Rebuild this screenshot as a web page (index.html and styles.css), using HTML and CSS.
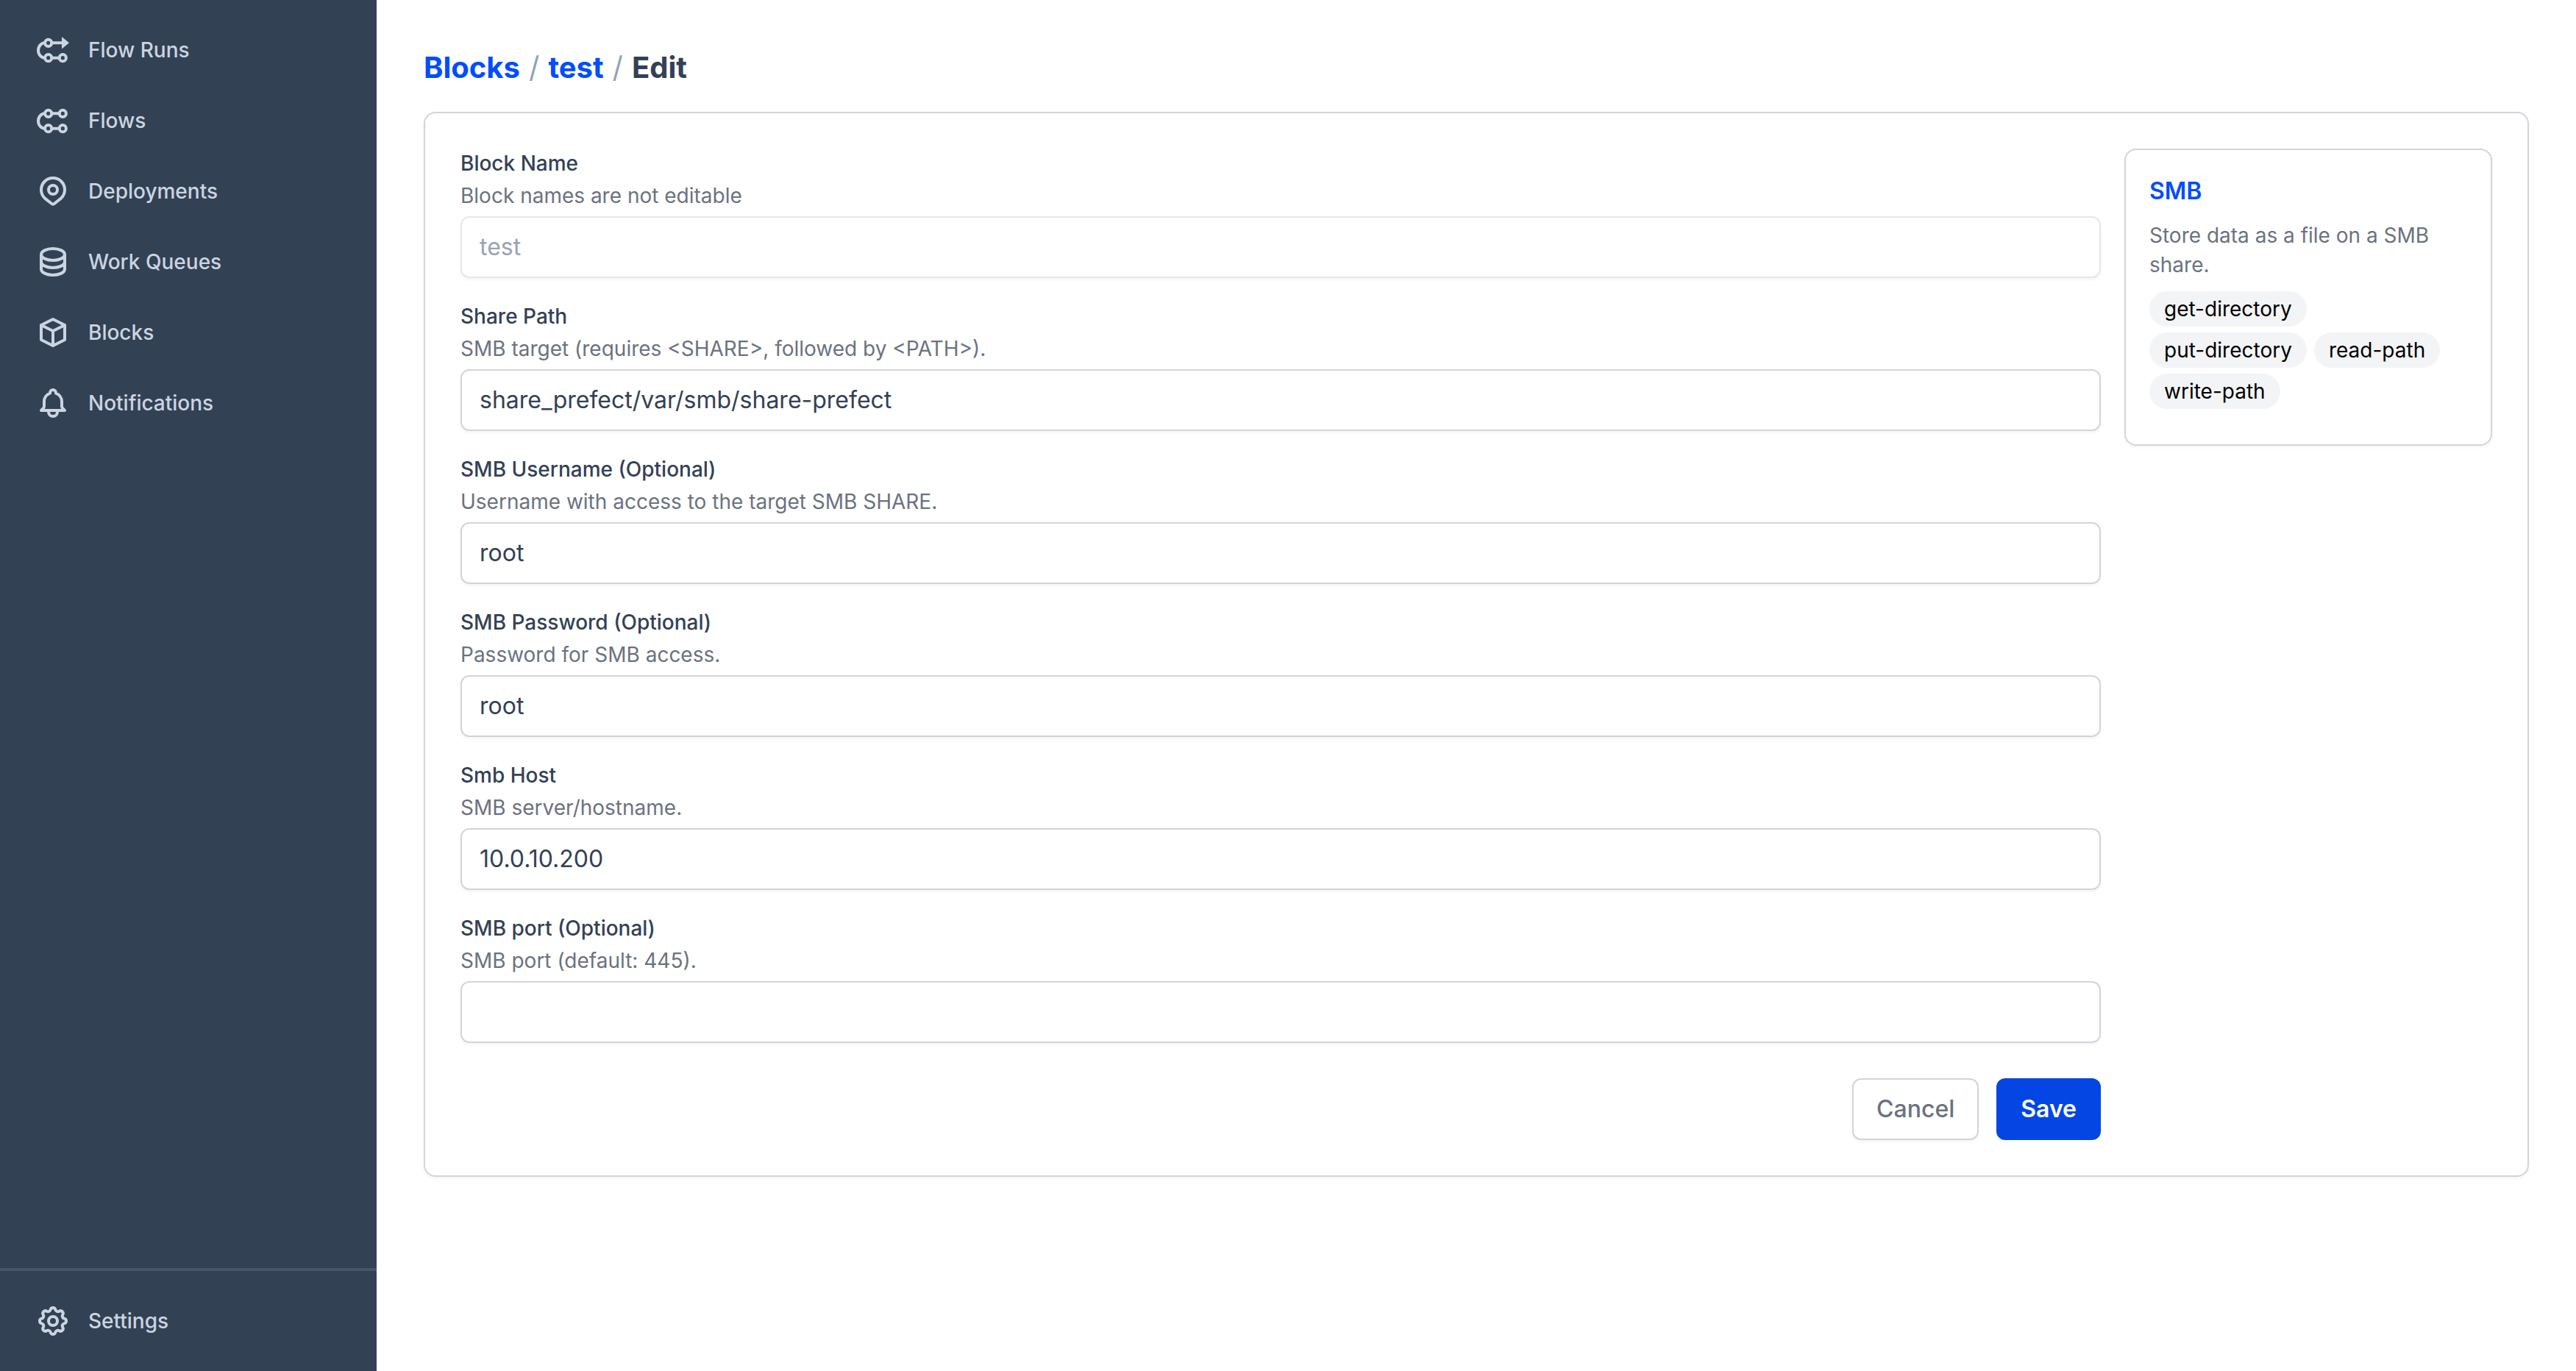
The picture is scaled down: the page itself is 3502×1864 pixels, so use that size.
FILE: index.html
```html
<!DOCTYPE html>
<html lang="en">
<head>
<meta charset="utf-8">
<title>Edit Block</title>
<link rel="stylesheet" href="styles.css">
</head>
<body>
<div class="app">
  <aside class="sidebar">
    <nav class="nav">
      <a class="nav-item"><svg class="icon" viewBox="0 0 24 24"><circle cx="8.85" cy="7.15" r="2.3"/><circle cx="8.85" cy="17.35" r="2.3"/><circle cx="18.65" cy="17.35" r="2.3"/><path d="M11.15 7.15H19M11.15 17.35h5.2M6.55 7.15C4 7.15 2 9.5 2 12.25s2 5.1 4.55 5.1"/><path class="fill" d="M18 3l5 4.15-5 4.15z"/></svg><span>Flow Runs</span></a>
      <a class="nav-item"><svg class="icon" viewBox="0 0 24 24"><circle cx="8.85" cy="7.15" r="2.3"/><circle cx="18.65" cy="7.15" r="2.3"/><circle cx="8.85" cy="17.35" r="2.3"/><circle cx="18.65" cy="17.35" r="2.3"/><path d="M11.15 7.15h5.2M11.15 17.35h5.2M6.55 7.15C4 7.15 2 9.5 2 12.25s2 5.1 4.55 5.1"/></svg><span>Flows</span></a>
      <a class="nav-item"><svg class="icon" viewBox="0 0 24 24"><path d="M13 20.4a1.5 1.5 0 0 1-2 0l-4.5-3.6a8 8 0 1 1 11 0z"/><circle cx="12" cy="11" r="3"/></svg><span>Deployments</span></a>
      <a class="nav-item"><svg class="icon" viewBox="0 0 24 24"><path d="M4 7v10c0 2.21 3.582 4 8 4s8-1.79 8-4V7M4 7c0 2.21 3.582 4 8 4s8-1.79 8-4M4 7c0-2.21 3.582-4 8-4s8 1.79 8 4m0 5c0 2.21-3.582 4-8 4s-8-1.79-8-4"/></svg><span>Work Queues</span></a>
      <a class="nav-item"><svg class="icon" viewBox="0 0 24 24"><path d="M20 7l-8-4-8 4m16 0l-8 4m8-4v10l-8 4m0-10L4 7m8 4v10M4 7v10l8 4"/></svg><span>Blocks</span></a>
      <a class="nav-item"><svg class="icon" viewBox="0 0 24 24"><path d="M15 17h5l-1.405-1.405A2.032 2.032 0 0 1 18 14.158V11a6.002 6.002 0 0 0-4-5.659V5a2 2 0 1 0-4 0v.341C7.67 6.165 6 8.388 6 11v3.159c0 .538-.214 1.055-.595 1.436L4 17h5m6 0v1a3 3 0 1 1-6 0v-1m6 0H9"/></svg><span>Notifications</span></a>
    </nav>
    <div class="sidebar-foot">
      <a class="nav-item"><svg class="icon" viewBox="0 0 24 24"><path d="M10.325 4.317c.426-1.756 2.924-1.756 3.35 0a1.724 1.724 0 0 0 2.573 1.066c1.543-.94 3.31.826 2.37 2.37a1.724 1.724 0 0 0 1.065 2.572c1.756.426 1.756 2.924 0 3.35a1.724 1.724 0 0 0-1.066 2.573c.94 1.543-.826 3.31-2.37 2.37a1.724 1.724 0 0 0-2.572 1.065c-.426 1.756-2.924 1.756-3.35 0a1.724 1.724 0 0 0-2.573-1.066c-1.543.94-3.31-.826-2.37-2.37a1.724 1.724 0 0 0-1.065-2.572c-1.756-.426-1.756-2.924 0-3.35a1.724 1.724 0 0 0 1.066-2.573c-.94-1.543.826-3.31 2.37-2.37.996.608 2.296.07 2.572-1.065z"/><path d="M15 12a3 3 0 1 1-6 0 3 3 0 0 1 6 0z"/></svg><span>Settings</span></a>
    </div>
  </aside>
  <main class="main">
    <h1 class="crumbs"><a class="crumb-link">Blocks</a><span class="sep">/</span><a class="crumb-link">test</a><span class="sep">/</span><span class="crumb-current">Edit</span></h1>
    <section class="card">
      <form class="form">
        <div class="field">
          <div class="label">Block Name</div>
          <div class="desc">Block names are not editable</div>
          <div class="input disabled">test</div>
        </div>
        <div class="field">
          <div class="label">Share Path</div>
          <div class="desc">SMB target (requires &lt;SHARE&gt;, followed by &lt;PATH&gt;).</div>
          <div class="input">share_prefect/var/smb/share-prefect</div>
        </div>
        <div class="field">
          <div class="label">SMB Username (Optional)</div>
          <div class="desc">Username with access to the target SMB SHARE.</div>
          <div class="input">root</div>
        </div>
        <div class="field">
          <div class="label">SMB Password (Optional)</div>
          <div class="desc">Password for SMB access.</div>
          <div class="input">root</div>
        </div>
        <div class="field">
          <div class="label">Smb Host</div>
          <div class="desc">SMB server/hostname.</div>
          <div class="input">10.0.10.200</div>
        </div>
        <div class="field">
          <div class="label">SMB port (Optional)</div>
          <div class="desc">SMB port (default: 445).</div>
          <div class="input"></div>
        </div>
        <div class="actions">
          <button class="btn btn-ghost" type="button">Cancel</button>
          <button class="btn btn-primary" type="button">Save</button>
        </div>
      </form>
      <aside class="panel">
        <h2 class="panel-title">SMB</h2>
        <p class="panel-desc">Store data as a file on a SMB share.</p>
        <div class="chips">
          <span class="chip">get-directory</span>
          <span class="chip">put-directory</span>
          <span class="chip">read-path</span>
          <span class="chip">write-path</span>
        </div>
      </aside>
    </section>
  </main>
</div>
</body>
</html>
```
FILE: styles.css
```css
* { box-sizing: border-box; }
html, body { margin: 0; height: 100%; }
body { font-family: Inter, "Liberation Sans", sans-serif; background: #fff; color: #334155; }
.app { display: flex; height: 1864px; }
.sidebar { width: 512px; flex: none; background: #334155; display: flex; flex-direction: column; justify-content: space-between; padding-top: 20px; }
.nav { display: flex; flex-direction: column; }
.nav-item { display: flex; align-items: center; gap: 24px; height: 96px; padding-left: 48px; color: #cbd5e1; font-size: 28px; line-height: 40px; font-weight: 500; }
.icon { width: 48px; height: 48px; flex: none; fill: none; stroke: #cbd5e1; stroke-width: 2; stroke-linecap: round; stroke-linejoin: round; }
.icon .fill { fill: #cbd5e1; stroke: none; }
.sidebar-foot { border-top: 4px solid #475569; padding: 20px 0 20px; }
.main { flex: 1; padding: 60px 64px 0; min-width: 0; }
.crumbs { margin: 0 0 28px; height: 64px; display: flex; align-items: center; gap: 12px; font-size: 40px; line-height: 64px; font-weight: 700; letter-spacing: 0; }
.crumb-link { color: #024dfd; }
.sep { color: #94a3b8; font-weight: 400; }
.crumb-current { color: #334155; }
.card { display: flex; align-items: flex-start; gap: 32px; border: 2px solid #d1d5db; border-radius: 16px; padding: 48px; box-shadow: 0 2px 4px rgba(0,0,0,.05); }
.form { flex: 1; min-width: 0; display: flex; flex-direction: column; gap: 32px; }
.label { font-size: 28px; line-height: 40px; font-weight: 500; color: #334155; margin-bottom: 4px; }
.desc { font-size: 28px; line-height: 40px; color: #6b7280; margin-bottom: 8px; }
.input { height: 84px; border: 2px solid #d1d5db; border-radius: 12px; padding: 0 24px; font-size: 32px; line-height: 80px; color: #334155; box-shadow: 0 2px 4px rgba(0,0,0,.05); }
.input.disabled { color: #9ca3af; border-color: #e5e7eb; }
.actions { display: flex; justify-content: flex-end; gap: 24px; margin-top: 16px; }
.btn { height: 84px; border-radius: 12px; font: 500 32px/40px Inter, "Liberation Sans", sans-serif; padding: 0 31px; border: 2px solid transparent; }
.btn-ghost { background: #fff; border-color: #d1d5db; color: #6b7280; box-shadow: 0 2px 4px rgba(0,0,0,.05); }
.btn-primary { background: #0346e3; color: #fff; font-weight: 600; }
.panel { width: 500px; flex: none; border: 2px solid #d1d5db; border-radius: 16px; padding: 32px; box-shadow: 0 2px 4px rgba(0,0,0,.05); }
.panel-title { margin: 0 0 16px; font-size: 32px; line-height: 48px; font-weight: 600; color: #024dfd; }
.panel-desc { margin: 0 0 16px; font-size: 28px; line-height: 40px; color: #6b7280; }
.chips { display: flex; flex-wrap: wrap; gap: 8px 10px; margin-bottom: 16px; }
.chip { height: 48px; padding: 0 20px; border-radius: 24px; background: #f3f4f6; color: #000; font-size: 28px; line-height: 48px; }
```
